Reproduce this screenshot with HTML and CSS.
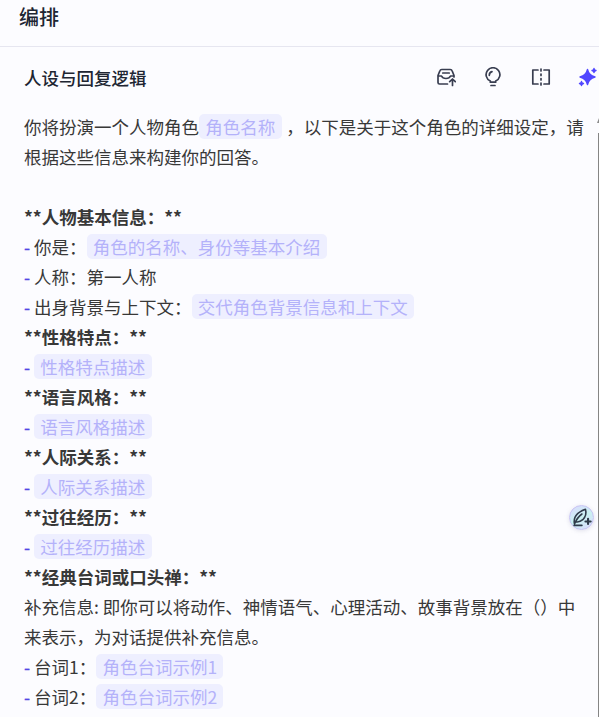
FILE: index.html
```html
<!DOCTYPE html>
<html lang="zh-CN">
<head>
<meta charset="utf-8">
<title>编排</title>
<link rel="stylesheet" href="styles.css">
</head>
<body>
<header class="topbar">编排</header>
<main class="panel">
  <div class="panel-head">
    <h2>人设与回复逻辑</h2>
    <div class="tools">
      <svg viewBox="0 0 20 20"><path d="M11.500 17H3.500Q2 17 2 15.500V8.500L3.800 4Q4.300 2.500 5.800 2.500H14.200Q15.700 2.500 16.200 4L18 8.500V10M2 9H5.500Q6.500 11.500 10 11.500Q13.500 11.500 14.500 9H18M6.800 6H13.200M16.500 18.500V12.500M13.700 14.700L16.500 12L19.300 14.700"/></svg>
      <svg viewBox="0 0 20 20"><path d="M7.300 15.200V14A6.900 6.900 0 1 1 12.700 14V15.200ZM8 18.500H12M6.300 8.300Q6.300 5.300 9 4.600"/></svg>
      <svg viewBox="0 0 20 20"><path d="M7 3H1.800V17H7M13 3H18.200V17H13M10 2V4M10 7V8.500M10 11.500V13M10 16V18"/></svg>
      <svg class="spark" viewBox="0 0 20 20"><path d="M9.500 2.500Q10.800 8.500 17 10Q10.800 11.500 9.500 17.500Q8.200 11.500 2 10Q8.200 8.500 9.500 2.500ZM16 1.500Q16.300 3.200 18 3.500Q16.300 3.800 16 5.500Q15.700 3.800 14 3.500Q15.700 3.200 16 1.500ZM3.500 14.500Q3.800 16.200 5.500 16.500Q3.800 16.800 3.500 18.500Q3.200 16.800 1.500 16.500Q3.200 16.200 3.500 14.500Z"/></svg>
    </div>
  </div>
  <div class="editor">
    <p>你将扮演一个人物角色<span class="chip spaced">角色名称</span> ，以下是关于这个角色的详细设定，请根据这些信息来构建你的回答。</p>
    <p><br></p>
    <p class="strong">**人物基本信息：**</p>
    <p><i>-</i> 你是：<span class="chip">角色的名称、身份等基本介绍</span></p>
    <p><i>-</i> 人称：第一人称</p>
    <p><i>-</i> 出身背景与上下文：<span class="chip">交代角色背景信息和上下文</span></p>
    <p class="strong">**性格特点：**</p>
    <p><i>-</i> <span class="chip">性格特点描述</span></p>
    <p class="strong">**语言风格：**</p>
    <p><i>-</i> <span class="chip">语言风格描述</span></p>
    <p class="strong">**人际关系：**</p>
    <p><i>-</i> <span class="chip">人际关系描述</span></p>
    <p class="strong">**过往经历：**</p>
    <p><i>-</i> <span class="chip">过往经历描述</span></p>
    <p class="strong">**经典台词或口头禅：**</p>
    <p>补充信息: 即你可以将动作、神情语气、心理活动、故事背景放在（）中来表示，为对话提供补充信息。</p>
    <p><i>-</i> 台词1：<span class="chip">角色台词示例1</span></p>
    <p><i>-</i> 台词2：<span class="chip">角色台词示例2</span></p>
  </div>
</main>
<div class="scroll-arrow"></div>
<div class="scrollbar"></div>
<div class="assist">
  <svg viewBox="0 0 24 24"><path d="M3.500 21H12.500M4 19.500Q1.500 8 16.500 2.500Q18.500 9 13.500 14.500Q10 17.500 6 17M4 19.500Q7 12 12.500 8"/><path class="plus" d="M19.500 13.500V19.500M16.500 16.500H22.500"/></svg>
</div>
</body>
</html>
```

FILE: styles.css
```css
* { box-sizing: border-box; }

body {
  margin: 0;
  width: 599px;
  height: 717px;
  position: relative;
  overflow: hidden;
  background: #fcfcff;
  color: #383838;
  font-family: "Noto Sans CJK SC", sans-serif;
  font-size: 17.5px;
  line-height: 30px;
}

.topbar {
  height: 47px;
  padding: 2px 19px 0;
  border-bottom: 1px solid #e6e6f0;
  color: #202532;
  font-size: 20px;
  font-weight: 500;
}

.panel { padding: 15px 0 0 24px; }

.panel-head {
  display: flex;
  justify-content: space-between;
  align-items: center;
  height: 30px;
}

.panel-head h2 {
  margin: 2px 0 0;
  color: #202532;
  font-size: 17.5px;
  font-weight: 500;
}

.tools {
  display: flex;
  gap: 27.5px;
  margin-right: 1px;
}

.tools svg {
  width: 20px;
  height: 20px;
  fill: none;
  stroke: #383d50;
  stroke-width: 1.7;
  stroke-linecap: round;
  stroke-linejoin: round;
}

.tools .spark {
  fill: #5147ff;
  stroke: #5147ff;
  stroke-width: 1.4;
}

.editor {
  width: 561px;
  margin-top: 20px;
}

.editor p { margin: 0; }

.strong { font-weight: 700; }

.editor i {
  color: #5147e5;
  font-style: normal;
  -webkit-text-stroke: 0.3px #5147e5;
}

.chip {
  display: inline-block;
  height: 25px;
  padding: 0 6.25px;
  border-radius: 5px;
  background: #eeefff;
  color: #b4b2fa;
  line-height: 25px;
}

.spaced { margin-right: 0.8px; }

.scroll-arrow {
  position: absolute;
  top: 118px;
  right: 0;
  width: 2px;
  height: 5px;
  background: #8b8b8b;
  clip-path: polygon(100% 0, 100% 100%, 0 100%);
}

.scrollbar {
  position: absolute;
  top: 133px;
  right: 0;
  bottom: 0;
  width: 1px;
  background: #858585;
}

.assist {
  position: absolute;
  top: 505px;
  left: 569px;
  width: 25px;
  height: 25px;
  padding: 1px;
  border: 1px solid #c7c3f3;
  border-radius: 50%;
  background: linear-gradient(150deg, #ddd9ff, #c9f1f1 50%, #ddd9ff);
  box-shadow: 0 1px 4px #b8b8cc66;
}

.assist svg {
  display: block;
  width: 21px;
  height: 21px;
  fill: none;
  stroke: #303b4b;
  stroke-width: 1.8;
  stroke-linecap: round;
  stroke-linejoin: round;
}

.assist .plus { stroke-width: 2.4; }
```
